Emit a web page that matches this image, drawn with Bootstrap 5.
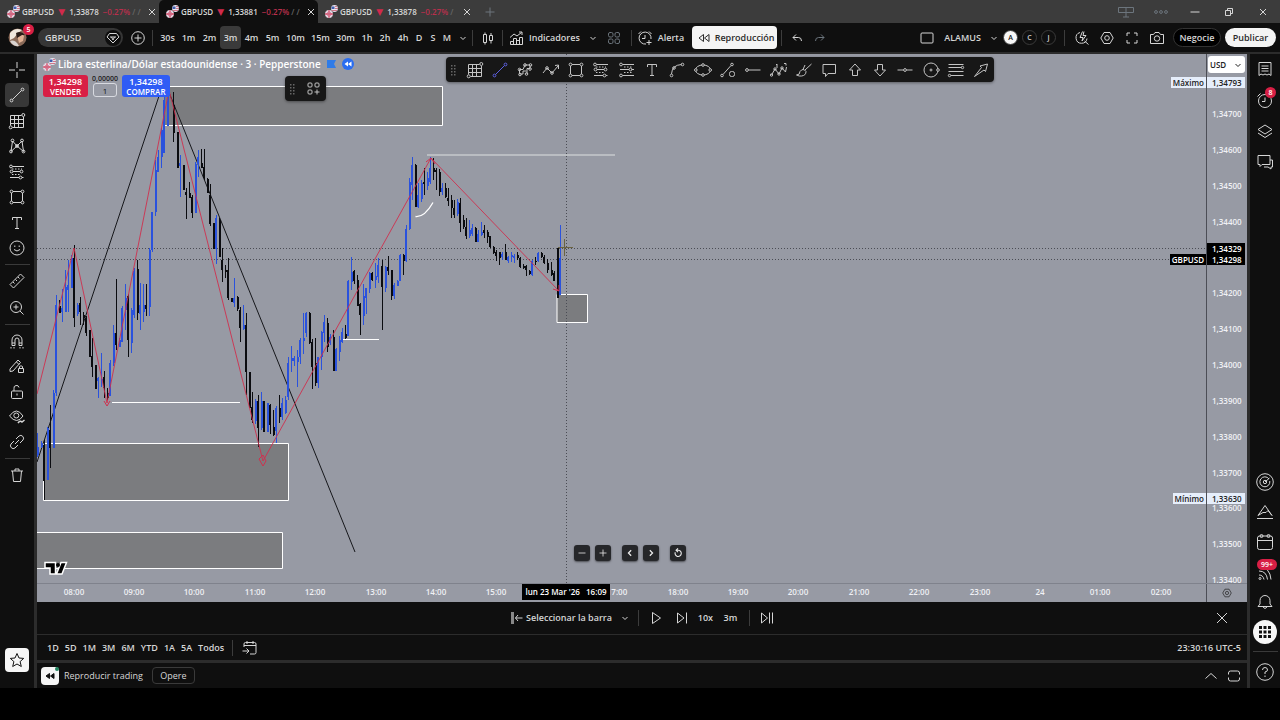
<!DOCTYPE html>
<html lang="es" data-bs-theme="dark">
<head>
<meta charset="utf-8">
<meta name="viewport" content="width=device-width, initial-scale=1">
<title>GBPUSD</title>
<link href="https://cdn.jsdelivr.net/npm/bootstrap@5.3.0/dist/css/bootstrap.min.css" rel="stylesheet">
<style>
:root{--panel:#0f0f0f;--line:#2c2c2c;--ink:#d6d6d6;--plot:#979aa4;--red:#d81f45;--blue:#2f5cf5}
body{background:#000;color:var(--ink);font:600 9px/14px "Open Sans","Noto Sans",sans-serif;min-height:100vh;padding-bottom:32px;overflow:hidden}
button{background:none;border:0;padding:0;color:inherit;font:inherit;line-height:14px;display:inline-flex;align-items:center;justify-content:center;white-space:nowrap;flex:none}
.ico{width:18px;height:18px;fill:none;stroke:currentColor;stroke-width:1;flex:none;display:block}
.vr-line{width:1px;height:16px;background:#3c3c3c;flex:none}
.hr-line{height:1px;width:25px;background:#3a3a3a;margin:4px auto}
/* window tabs */
.tabstrip{background:#3c3c3c;height:23px}
.win-tab{width:159px;padding:0 1px 0 7px;gap:2px;font-size:8px;background:#3c3c3c;height:23px}
.win-tab.on{background:var(--panel);border-radius:5px 5px 0 0}
.win-tab .chg{color:#b92f4c;flex:1;white-space:nowrap;padding-left:2px}
.win-tab .chg i{color:#666;font-style:normal}
.win-tab .down{color:#d12a4c;font:9px/14px "DejaVu Sans",sans-serif;padding:0 2px}
.flag{width:13px;height:13px;flex:none}
/* main toolbar */
.topbar{background:var(--panel);height:31px;border-bottom:2px solid var(--line)}
.b14{width:14px}.b18{width:18px}.b21{width:21px}.b25{width:25px}
.topbar .tf{height:23px;border-radius:4px}
.topbar .tf.on{background:#3a3a3a}
.avatar{width:19px;height:19px;margin-left:8px}
.alert-dot{position:absolute;left:15px;top:-4px;min-width:11px;height:11px;border-radius:6px;background:var(--red);color:#fff;font-size:7px;line-height:11px;text-align:center}
.sym{width:85px;height:19px;border-radius:10px;background:#363636;margin-left:11px;padding:0 2px 0 7px;justify-content:space-between}
.sym span{background:var(--panel);border-radius:50%;width:16px;height:16px}
.replay-on{background:#f4f4f4;color:#2a2a2a;width:85px;height:23px;border-radius:4px;gap:2px}
.disc{width:15px;height:15px;border-radius:50%;border:1px solid #3a3a3a;font-size:7px}
.disc.on{background:#f7f7f7;color:#111}
.pill{height:19px;border-radius:10px}
.pill.dark{background:#000;border:1px solid #333;width:48px}
.pill.light{background:#f4f4f4;color:#2a2a2a;width:51px}
/* side rails */
.rail{background:var(--panel);flex:none}
.rail-l{width:37px;border-right:3px solid var(--line);padding-top:4px}
.rail-r{width:33px;border-left:3px solid var(--line)}
.rail button{width:24px;height:24px;border-radius:4px;margin:0 auto;position:relative}
.rail-l button{margin-left:5px}
.rail button.on{background:#383838}
.g8{height:202px}.g2{height:51px}.g5{height:125px}.g4{height:123px}.g6{height:180px}
.rail .white{background:#f6f6f6;color:#111}
.rail .alert-dot{left:12px;top:-1px}
/* chart */
.plot{background:var(--plot);flex:1;min-width:0;min-height:0;overflow:hidden}
.plot svg.canvas{position:absolute;left:0;top:0;width:100%;height:100%}
.price{width:41px;background:var(--plot);border-left:1px solid #4c4e56;overflow:hidden;flex:none}
.price svg.canvas{position:absolute;left:0;top:0;width:100%;height:100%}
.canvas text{font:600 8px "Open Sans",sans-serif;fill:#f0f1f5}
.price select{position:absolute;left:1px;top:2px;width:37px;height:17px;border:0;border-radius:3px;background:#fff;color:#222;font:600 8px "Open Sans",sans-serif;padding:0 2px;appearance:none}
.price .caret{position:absolute;left:27px;top:7px;width:8px;height:8px;color:#222;pointer-events:none}
.tag{position:absolute;right:0;font-size:8px;line-height:11px;padding:0 2px;height:11px}
.price .tag{right:2px;left:0;padding:0 0 0 5px}
.tag.hi{background:#e6eefb;color:#222}
.tag.now{background:#000;color:#fff}
.legend{position:absolute;left:6px;top:3px;color:#fff;font-size:10px;line-height:14px;gap:2px}
.trade{position:absolute;left:6px;top:21px}
.trade button{width:45px;height:22px;border-radius:3px;flex-direction:column;color:#fff;font-size:8px;line-height:9px}
.sell{background:var(--red)}
.trade button.buy{width:48px;background:var(--blue)}
.trade button b{font-size:9px;font-weight:600;line-height:10px}
.trade label{font-size:7px;line-height:8px;color:#222}
.trade input{width:24px;height:14px;border:1px solid #d8dae0;border-radius:3px;background:#979aa4;color:#111;font:8px "Open Sans",sans-serif;text-align:center;padding:0}
.float-bar{position:absolute;background:#171717;border-radius:4px;color:#c4c4c4;box-shadow:0 1px 3px rgba(0,0,0,.4)}
.mini{left:248px;top:22px;width:41px;height:25px}
.draw{left:409px;top:3px;width:548px;height:25px}
.draw button{flex:1;height:25px}
.draw .lit{color:#5b5fe0}
.grip{width:16px;height:12px;flex:none}
.zoomers{position:absolute;left:537px;bottom:22px;gap:11px}
.zoomers div{gap:5px}
.zoomers button{width:16px;height:16px;border-radius:3px;background:#26272a;color:#eee;box-shadow:0 1px 2px rgba(0,0,0,.5)}
.zoomers .ico{width:14px;height:14px}
.time{height:19px;background:var(--plot);border-top:1px solid #7f828c;position:relative;overflow:hidden}
.time svg.canvas{width:100%;height:18px;display:block}
.time .when{position:absolute;left:485px;top:0;background:#000;color:#fff;font-size:8px;line-height:16px;width:88px;white-space:nowrap;text-align:center}
.time .cfg{width:41px;border-left:1px solid #4c4e56;flex:none;color:#222}
.below{background:var(--panel)}
.replay{height:33px;border-bottom:1px solid var(--line);position:relative}
.ranges{height:25px;padding:0 6px 0 10px;gap:6px}
.ranges .vr-line{margin:0 2px}
.tradebar{height:28px;border-top:3px solid var(--line);padding:0 4px;gap:5px;font-weight:400}
.rew-tile{background:#f5f5f5;color:#111}
.opere{border:1px solid #3a3a3a;border-radius:4px;width:43px;height:17px}
</style>
</head>
<body class="d-flex flex-column">

<svg width="0" height="0" class="position-absolute" aria-hidden="true"><defs>
<symbol id="flag" viewBox="0 0 13 13"><circle cx="9.500" cy="3.500" r="3.400" fill="#e9e4ee"/><path d="M6.500 1.500h3v2.500h-3z" fill="#3f5fae"/><path d="M10 1.500h2M10 3.500h3M6.500 5.500h5.500" stroke="#c95a70" stroke-width=".8"/><circle cx="4" cy="9" r="3.900" fill="#e6dfea"/><path d="M4 5.200v7.600M.2 9h7.600" stroke="#d3415f" stroke-width="1.300"/><path d="M1.500 6.500l5 5M6.500 6.500l-5 5" stroke="#cd7590" stroke-width=".7"/></symbol>
<symbol id="x" viewBox="0 0 18 18"><path d="M6 6l6 6M12 6l-6 6"/></symbol>
<symbol id="bigx" viewBox="0 0 18 18"><path d="M4 4l10 10M14 4L4 14"/></symbol>
<symbol id="plus" viewBox="0 0 18 18"><path d="M9 4.500v9M4.500 9h9"/></symbol>
<symbol id="minus" viewBox="0 0 18 18"><path d="M4.500 9h9"/></symbol>
<symbol id="chev" viewBox="0 0 18 18"><path d="M6.500 8L9 10.500 11.500 8"/></symbol>
<symbol id="chevup" viewBox="0 0 18 18"><path d="M3.500 11.500L9 6.500l5.500 5"/></symbol>
<symbol id="left" viewBox="0 0 18 18"><path d="M10.500 5.500L7 9l3.500 3.500" stroke-width="1.600"/></symbol>
<symbol id="right" viewBox="0 0 18 18"><path d="M7.500 5.500L11 9l-3.500 3.500" stroke-width="1.600"/></symbol>
<symbol id="reset" viewBox="0 0 18 18"><path d="M5.500 8a4 4 0 1 0 3.500-2.500H7M9 3L6.500 5.500 9 8" stroke-width="1.400"/></symbol>
<symbol id="circplus" viewBox="0 0 18 18"><circle cx="9" cy="9" r="6.300"/><path d="M9 5.500v7M5.500 9h7"/></symbol>
<symbol id="gem" viewBox="0 0 18 18"><path d="M5.500 4.500h7L15 8l-6 6-6-6zM6 8h6M7.500 8L9 11l1.500-3"/></symbol>
<symbol id="candles" viewBox="0 0 18 18"><path d="M4.500 5.500h3v8h-3zM6 3.500v2M6 13.500v2M10.500 6.500h3v5h-3zM12 4v2.500M12 11.500v3"/></symbol>
<symbol id="indic" viewBox="0 0 18 18"><path d="M3.500 15.500v-3h3v-3h3v2h3v-3h3v7zM6.500 12v3.500M9.500 11v4.500M12.500 11v4.500M3 8.500l4-3.500 3 2 4.500-3.500M12 3h3v3"/></symbol>
<symbol id="four" viewBox="0 0 18 18"><rect x="3.500" y="3.500" width="4.500" height="4.500" rx="1.500"/><rect x="10" y="3.500" width="4.500" height="4.500" rx="1.500"/><rect x="3.500" y="10" width="4.500" height="4.500" rx="1.500"/><rect x="10" y="10" width="4.500" height="4.500" rx="1.500"/></symbol>
<symbol id="alarm" viewBox="0 0 18 18"><path d="M10 15A6 6 0 1 1 15 10M9 6v3.500H6M2.500 5L5 2.500M13 2.500L15.500 5M13 11v5M10.500 13.500h5"/></symbol>
<symbol id="rew" viewBox="0 0 18 18"><path d="M8.500 5.500v7L4 9zM14 5.500v7L9.500 9z"/></symbol>
<symbol id="rewf" viewBox="0 0 18 18"><path fill="currentColor" d="M8.500 6.500v5L5 9zM13 6.500v5L9.500 9z"/></symbol>
<symbol id="undo" viewBox="0 0 18 18"><path d="M8 5.500L5 8.500l3 3M5 8.500h5.500q3 0 3 3.500"/></symbol>
<symbol id="redo" viewBox="0 0 18 18"><path d="M10 5.500l3 3-3 3M13 8.500H7.500q-3 0-3 3.500"/></symbol>
<symbol id="layout" viewBox="0 0 18 18"><rect x="3" y="4" width="12" height="10" rx="1"/></symbol>
<symbol id="quick" viewBox="0 0 18 18"><path d="M7 3.500a5.500 5.500 0 1 0 7 6M11.500 12l4 3.500M9.500 2.500L7 8.500h3L9 12l4-5.500h-3l1-4"/></symbol>
<symbol id="hex" viewBox="0 0 18 18"><path d="M6 3.500h6L15.200 9 12 14.500H6L2.800 9z"/><circle cx="9" cy="9" r="2.300"/></symbol>
<symbol id="full" viewBox="0 0 18 18"><path d="M4 7V4h3M11 4h3v3M14 11v3h-3M7 14H4v-3"/></symbol>
<symbol id="cam" viewBox="0 0 18 18"><path d="M2.500 5.500h3l1.500-2h4l1.500 2h3v9h-13z"/><circle cx="9" cy="9.500" r="2.700"/></symbol>
<symbol id="cross" viewBox="0 0 18 18"><path d="M9 1v6M9 11v6M1 9h6M11 9h6"/></symbol>
<symbol id="trend" viewBox="0 0 18 18"><path d="M4.500 13.500l9-9"/><circle cx="3.500" cy="14.500" r="1.400"/><circle cx="14.500" cy="3.500" r="1.400"/></symbol>
<symbol id="gann" viewBox="0 0 18 18"><path d="M2.500 3.500h11M2.500 3.500v10M2.500 7.500h13M2.500 11.500h13M4.500 15.500h11M6.500 3.500v12M10.500 3.500v12M15.500 5v10.500"/><circle cx="15.300" cy="3" r="1.500"/><circle cx="2.700" cy="15.300" r="1.500"/></symbol>
<symbol id="xabcd" viewBox="0 0 18 18"><path d="M3 14.500L4.500 4 9 9l5-5 1.500 10.500L9 9z"/><circle cx="3" cy="14.500" r="1.400"/><circle cx="4.500" cy="3.500" r="1.400"/><circle cx="9" cy="9" r="1.400"/><circle cx="14" cy="3.500" r="1.400"/><circle cx="15.500" cy="14.500" r="1.400"/></symbol>
<symbol id="fib" viewBox="0 0 18 18"><path d="M4.500 3.500H16M5 8.500h7M2 14.500h9"/><path d="M14 14.500h2M4 6h10M4 11.500h9" stroke-dasharray="1.500 1.500"/><circle cx="3" cy="3.500" r="1.400"/><circle cx="13.500" cy="8.500" r="1.400"/><circle cx="3.500" cy="8.500" r="1.400"/><circle cx="12.500" cy="14.500" r="1.400"/></symbol>
<symbol id="fib2" viewBox="0 0 18 18"><path d="M4.500 3.500H16M2 8.500h9M4.500 14.500H16M13.500 8.500H16"/><path d="M6 6h9M6 11.500h9" stroke-dasharray="1.500 1.500"/><circle cx="3" cy="3.500" r="1.400"/><circle cx="12.500" cy="8.500" r="1.400"/><circle cx="3" cy="14.500" r="1.400"/></symbol>
<symbol id="box" viewBox="0 0 18 18"><path d="M5 3.500h8M5 14.500h8M3.500 5v8M14.500 5v8"/><circle cx="3.500" cy="3.500" r="1.400"/><circle cx="14.500" cy="3.500" r="1.400"/><circle cx="3.500" cy="14.500" r="1.400"/><circle cx="14.500" cy="14.500" r="1.400"/></symbol>
<symbol id="tee" viewBox="0 0 18 18"><path d="M4.500 6V3.500h9V6M9 3.500v11M7 14.500h4"/></symbol>
<symbol id="smile" viewBox="0 0 18 18"><circle cx="9" cy="9" r="7"/><path d="M6 10.500q3 3 6 0M6.800 6.500v1.500M11.200 6.500v1.500"/></symbol>
<symbol id="ruler" viewBox="0 0 18 18"><path d="M2 12.500L12.500 2 16 5.500 5.500 16zM5 10l1.500 1.500M7.500 7.500L9 9M10 5l1.500 1.500"/></symbol>
<symbol id="zoomin" viewBox="0 0 18 18"><circle cx="8" cy="8" r="5.500"/><path d="M12 12l3.500 3.500M8 5.500v5M5.500 8h5"/></symbol>
<symbol id="magnet" viewBox="0 0 18 18"><path d="M4 13.500V8a5 5 0 0 1 10 0v5.500h-3V8a2 2 0 0 0-4 0v5.500zM4 11h3M11 11h3M3 15v1.500M6 15v1.500M12 15v1.500M15 15v1.500"/></symbol>
<symbol id="penlock" viewBox="0 0 18 18"><path d="M2 12l8-9 2.500 2.500L5 14l-3 .5zM8.500 5L11 7.500M10.500 11.500h5v4h-5zM11.500 11.500V9.500q1.500-1.500 3 0v2"/></symbol>
<symbol id="lock" viewBox="0 0 18 18"><rect x="3.500" y="8" width="11" height="7.500" rx="1"/><path d="M6 8V5.500a2.500 2.500 0 0 1 5-1M9 10.500v2"/></symbol>
<symbol id="eye" viewBox="0 0 18 18"><path d="M1.500 8Q8.500-2 15 8q-6 9-13.500 0z"/><circle cx="8.300" cy="7.500" r="2.500"/><path d="M10 15q2-3 4-1l2.500-2" stroke-width="1.500"/></symbol>
<symbol id="link" viewBox="0 0 18 18"><path d="M7 11l4-4M8 6l3-3q2-1.500 3.700.3T15 7l-3 3M10 12l-3 3q-2 1.500-3.700-.3T3 11l3-3"/></symbol>
<symbol id="trash" viewBox="0 0 18 18"><path d="M3 5h12M7 5V3h4v2M4.500 5L5.500 15.500h7L13.500 5"/></symbol>
<symbol id="star" viewBox="0 0 18 18"><path d="M9 2.500l2 4.500 4.700.4-3.600 3.200 1.200 4.900L9 13l-4.300 2.500 1.200-4.900L2.300 7.400 7 7z"/></symbol>
<symbol id="ghost" viewBox="0 0 18 18"><path d="M3.500 13V8.500H7L9 4h5v3.500h-3V13M3.500 13H7v-3h3.500"/><circle cx="3.500" cy="8.500" r="1.300"/><circle cx="9" cy="4" r="1.300"/><circle cx="14.500" cy="4" r="1.300"/><circle cx="14" cy="8" r="1.300"/><circle cx="10.500" cy="13" r="1.300"/><circle cx="4" cy="13.500" r="1.300"/></symbol>
<symbol id="zig" viewBox="0 0 18 18"><path d="M1 12l4-5 5 5 6-7M13 4.500l3.500-.5V8"/><circle cx="5" cy="7" r="1.300"/><circle cx="10" cy="12" r="1.300"/></symbol>
<symbol id="curve" viewBox="0 0 18 18"><path d="M3.500 13Q4 4 13.500 3.500"/><circle cx="3.500" cy="14.500" r="1.300"/><circle cx="14.500" cy="3.500" r="1.300"/><circle cx="6" cy="7" r="1.300"/></symbol>
<symbol id="ellipse" viewBox="0 0 18 18"><ellipse cx="9" cy="9" rx="7.500" ry="5"/><circle cx="9" cy="4" r="1.300" fill="#171717"/><circle cx="9" cy="14" r="1.300" fill="#171717"/><circle cx="1.800" cy="9" r="1.300" fill="#171717"/><circle cx="16.200" cy="9" r="1.300" fill="#171717"/></symbol>
<symbol id="trendc" viewBox="0 0 18 18"><path d="M4 13.500l8-9"/><circle cx="3" cy="14.500" r="1.300"/><circle cx="13" cy="3.500" r="1.300"/><rect x="10.500" y="10.500" width="5" height="5" rx="2"/></symbol>
<symbol id="ray" viewBox="0 0 18 18"><circle cx="3" cy="9" r="1.400"/><path d="M4.500 9h12"/></symbol>
<symbol id="elliott" viewBox="0 0 18 18"><path d="M1.500 14L5 8l4 5 3-6 3.500 4 1-5M6 4l1-1v4M14 2.500h2v2"/><circle cx="1.500" cy="14" r="1.200"/><circle cx="5" cy="8" r="1.200"/><circle cx="9" cy="13" r="1.200"/><circle cx="12" cy="7" r="1.200"/></symbol>
<symbol id="brush" viewBox="0 0 18 18"><path d="M1.500 14q3.500 0 3.500-3.500 3-4 6 0 0 4-4.500 4.500-2 .5-5-1zM10 9l6.500-6M8 8.500L10 4"/></symbol>
<symbol id="note" viewBox="0 0 18 18"><path d="M3 3.500h12.500v9H8l-2.500 3v-3H3z"/></symbol>
<symbol id="up" viewBox="0 0 18 18"><path d="M9 3L3.500 9h3v5.500h5V9h3z"/></symbol>
<symbol id="down" viewBox="0 0 18 18"><path d="M9 15L3.500 9h3V3.500h5V9h3z"/></symbol>
<symbol id="hline" viewBox="0 0 18 18"><path d="M1.500 9h6M10.500 9h6"/><circle cx="9" cy="9" r="1.400"/></symbol>
<symbol id="circ" viewBox="0 0 18 18"><circle cx="9" cy="9" r="7"/><circle cx="9" cy="9" r="1"/><circle cx="16" cy="9" r="1.300" fill="#171717"/></symbol>
<symbol id="lines" viewBox="0 0 18 18"><path d="M1.500 3.500h15M1.500 6.500h13M1.500 10.500h15M4 14.500h12.500"/><circle cx="15.500" cy="6.500" r="1.200"/><circle cx="2.500" cy="14.500" r="1.200"/></symbol>
<symbol id="arrow" viewBox="0 0 18 18"><path d="M2.500 15.500l7-9-1.500-1.500 7.500-2-2 7.500-1.500-1.500z"/></symbol>
<symbol id="addtpl" viewBox="0 0 18 18"><rect x="3" y="3" width="4" height="4" rx="1"/><rect x="10" y="3" width="4" height="4" rx="1"/><rect x="3" y="10" width="4" height="4" rx="1"/><path d="M12 9.500v5M9.500 12h5"/></symbol>
<symbol id="grip" viewBox="0 0 16 12"><g fill="#666" stroke="none"><path d="M5 1h1.500v1.500H5zM8 1h1.500v1.500H8zM5 4h1.500v1.500H5zM8 4h1.500v1.500H8zM5 7h1.500v1.500H5zM8 7h1.500v1.500H8zM5 10h1.500v1.500H5zM8 10h1.500v1.500H8z"/></g></symbol>
<symbol id="news" viewBox="0 0 18 18"><path d="M3 2.500h12v13l-2-1.500-2 1-2-1-2 1-2-1-2 1.500zM5.500 6h7M5.500 8.500h7M5.500 11h7"/></symbol>
<symbol id="clock" viewBox="0 0 18 18"><circle cx="9" cy="10" r="6.500"/><path d="M9 6.500v4H6M1.500 5.500l3-3"/></symbol>
<symbol id="layers" viewBox="0 0 18 18"><path d="M9 3l7 4.500L9 12 2 7.500zM2 11l7 4.500L16 11"/></symbol>
<symbol id="chat" viewBox="0 0 18 18"><path d="M2 2.500h12v9H6l-2 2v-2H2zM14 7h2.500v7H15v2l-3-2H8"/></symbol>
<symbol id="radar" viewBox="0 0 18 18"><circle cx="9" cy="9" r="8.300"/><path d="M13 6a5 5 0 1 0 .8 2M9 9l4.500-4"/><circle cx="9" cy="9" r="1.700"/></symbol>
<symbol id="mount" viewBox="0 0 18 18"><path d="M1 15.500h16M2 12.500l7-10 7 10M2 12.500l5-3 3 0 2-2 4 5"/></symbol>
<symbol id="cal" viewBox="0 0 18 18"><rect x="1.500" y="3" width="15" height="13.500" rx="2"/><path d="M1.500 7.500h15"/><circle cx="5.500" cy="3" r="1.500"/><circle cx="12.500" cy="3" r="1.500"/></symbol>
<symbol id="feed" viewBox="0 0 18 18"><path d="M3 4q11 0 12 12.500M3 8q7.500 0 8.500 8.500M3 12q4 0 5 4.500"/><circle cx="4" cy="15.500" r="1"/></symbol>
<symbol id="bell" viewBox="0 0 18 18"><path d="M2 13.500h14L14 11V7.500a5 5 0 0 0-10 0V11zM7 14q2 3 4 0"/></symbol>
<symbol id="apps" viewBox="0 0 18 18"><g fill="currentColor" stroke="none"><path d="M3 3h3v3H3zM7.500 3h3v3h-3zM12 3h3v3h-3zM3 7.500h3v3H3zM7.500 7.500h3v3h-3zM12 7.500h3v3h-3zM3 12h3v3H3zM7.500 12h3v3h-3zM12 12h3v3h-3z"/></g></symbol>
<symbol id="help" viewBox="0 0 18 18"><circle cx="9" cy="9" r="8.300"/><path d="M6.500 7q0-2.500 2.500-2.500T11.500 7Q11.500 8.500 9 9v2M9 12.500V14"/></symbol>
<symbol id="selbar" viewBox="0 0 18 18"><path d="M4.500 3v12" stroke-width="3" stroke="#888"/><path d="M7.500 9h7M10 6L7.500 9l2.500 3"/></symbol>
<symbol id="play" viewBox="0 0 18 18"><path d="M5.500 3.500v11l8-5.500z"/></symbol>
<symbol id="step" viewBox="0 0 18 18"><path d="M4.500 4v10l6.500-5zM13.500 3.500v11"/></symbol>
<symbol id="toend" viewBox="0 0 18 18"><path d="M3.500 4v10l6-5zM11.500 3.500v11M14.500 3.500v11"/></symbol>
<symbol id="goto" viewBox="0 0 18 18"><path d="M3 8V5q0-1.500 1.500-1.500h9Q15 3.500 15 5v8.500q0 1.500-1.500 1.500H9M3 6.500h12M6 2v3M12 2v3M1.500 12h6M5.500 9.500L8 12l-2.500 2.500"/></symbol>
<symbol id="square" viewBox="0 0 18 18"><path d="M3.500 7.500V6Q3.500 4 5.500 4h7q2 0 2 2v1.500M3.500 10.500V12q0 2 2 2h7q2 0 2-2v-1.500"/></symbol>
<symbol id="panes" viewBox="0 0 18 18"><path d="M1.500 4.500h15v5h-15zM9 4.500V14M6 14h6"/></symbol>
<symbol id="dots" viewBox="0 0 18 18"><circle cx="4" cy="9" r="1.400"/><circle cx="9" cy="9" r="1.400"/><circle cx="14" cy="9" r="1.400"/></symbol>
<symbol id="restore" viewBox="0 0 18 18"><path d="M5.500 7.500h5v5h-5zM7.500 7V5.500h5v5H11"/></symbol>
</defs></svg>

<header>
  <div class="tabstrip d-flex align-items-center">
    <div class="win-tab d-flex align-items-center"><svg class="flag"><use href="#flag"/></svg><span>GBPUSD</span><span class="down">▼</span><span>1,33878</span><span class="chg">−0.27% <i>/ /</i></span><button aria-label="Cerrar"><svg class="ico"><use href="#x"/></svg></button></div>
    <div class="win-tab on d-flex align-items-center"><svg class="flag"><use href="#flag"/></svg><span>GBPUSD</span><span class="down">▼</span><span>1,33881</span><span class="chg">−0.27% <i>/ /</i></span><button aria-label="Cerrar"><svg class="ico"><use href="#x"/></svg></button></div>
    <div class="win-tab d-flex align-items-center"><svg class="flag"><use href="#flag"/></svg><span>GBPUSD</span><span class="down">▼</span><span>1,33878</span><span class="chg">−0.27% <i>/</i></span><button aria-label="Cerrar"><svg class="ico"><use href="#x"/></svg></button></div>
    <button class="ms-1 text-secondary" aria-label="Nueva pestaña"><svg class="ico"><use href="#plus"/></svg></button>
    <div class="ms-auto d-flex align-items-center pe-2">
      <button class="me-2 text-secondary" aria-label="Paneles"><svg class="ico"><use href="#panes"/></svg></button><span class="vr-line"></span>
      <button class="ms-2 me-3 text-secondary" aria-label="Más"><svg class="ico"><use href="#dots"/></svg></button>
      <button class="me-3" aria-label="Minimizar"><svg class="ico"><use href="#minus"/></svg></button>
      <button class="me-3" aria-label="Restaurar"><svg class="ico"><use href="#restore"/></svg></button>
      <button aria-label="Cerrar ventana"><svg class="ico"><use href="#x"/></svg></button>
    </div>
  </div>
  <nav class="topbar d-flex align-items-center">
    <button class="avatar position-relative" aria-label="Perfil"><svg width="19" height="19" viewBox="0 0 19 19"><circle cx="9.500" cy="9.500" r="9" fill="#8a6a58"/><path d="M2 5Q7-1 14 2l-4 3-4 5-4 2z" fill="#efe6dc"/><path d="M9 7q4-3 7 1l-1 5-4 2z" fill="#e0b193"/><path d="M8 5q5-3 9 2l-3 0-5 3z" fill="#2a1c18"/><path d="M2 13q5-2 9 5-6 1-9-5z" fill="#d9d3d0"/></svg><span class="alert-dot">5</span></button>
    <button class="sym">GBPUSD<span class="d-flex align-items-center justify-content-center"><svg class="ico" viewBox="0 0 18 18"><use href="#gem" width="18" height="18"/></svg></span></button>
    <button class="ms-1 me-1 b21" aria-label="Comparar"><svg class="ico"><use href="#circplus"/></svg></button>
    <span class="vr-line me-1"></span>
    <button class="tf b21">30s</button><button class="tf b21">1m</button><button class="tf b21">2m</button><button class="tf b21 on">3m</button><button class="tf b21">4m</button><button class="tf b21">5m</button><button class="tf b25">10m</button><button class="tf b25">15m</button><button class="tf b25">30m</button><button class="tf b18">1h</button><button class="tf b18">2h</button><button class="tf b18">4h</button><button class="tf b14">D</button><button class="tf b14">S</button><button class="tf b14">M</button>
    <button aria-label="Intervalos"><svg class="ico"><use href="#chev"/></svg></button>
    <span class="vr-line"></span>
    <button class="mx-1 b21" aria-label="Velas"><svg class="ico"><use href="#candles"/></svg></button>
    <span class="vr-line"></span>
    <button class="ms-1"><svg class="ico me-1"><use href="#indic"/></svg>Indicadores</button>
    <button class="ms-1" aria-label="Favoritos"><svg class="ico"><use href="#chev"/></svg></button>
    <button class="me-1 text-secondary b25" aria-label="Plantillas"><svg class="ico"><use href="#four"/></svg></button>
    <span class="vr-line"></span>
    <button class="ms-1 me-2"><svg class="ico me-1"><use href="#alarm"/></svg>Alerta</button>
    <button class="replay-on"><svg class="ico"><use href="#rew"/></svg>Reproducción</button>
    <span class="vr-line ms-1 me-1"></span>
    <button class="b21" aria-label="Deshacer"><svg class="ico"><use href="#undo"/></svg></button>
    <button class="b25 text-secondary" aria-label="Rehacer"><svg class="ico"><use href="#redo"/></svg></button>
    <div class="ms-auto d-flex align-items-center">
      <button class="me-2" aria-label="Diseño"><svg class="ico"><use href="#layout"/></svg></button>
      <button>ALAMUS</button>
      <button class="ms-1" aria-label="Diseños"><svg class="ico"><use href="#chev"/></svg></button>
      <div class="d-flex gap-1"><button class="disc on">A</button><button class="disc">C</button><button class="disc">J</button></div>
      <span class="vr-line ms-2 me-1"></span>
      <button class="b25" aria-label="Buscar"><svg class="ico"><use href="#quick"/></svg></button><button class="b25" aria-label="Ajustes"><svg class="ico"><use href="#hex"/></svg></button><button class="b25" aria-label="Pantalla completa"><svg class="ico"><use href="#full"/></svg></button><button class="b25 me-1" aria-label="Instantánea"><svg class="ico"><use href="#cam"/></svg></button>
      <button class="pill dark me-1">Negocie</button><button class="pill light me-1">Publicar</button>
    </div>
  </nav>
</header>

<main class="d-flex flex-grow-1">
  <aside class="rail rail-l d-flex flex-column">
    <div class="g8 d-flex flex-column justify-content-between" data-icons="cross trend* gann xabcd fib box tee smile"></div>
    <div class="hr-line"></div>
    <div class="g2 d-flex flex-column justify-content-between" data-icons="ruler zoomin"></div>
    <div class="hr-line"></div>
    <div class="g5 d-flex flex-column justify-content-between" data-icons="magnet penlock lock eye link"></div>
    <div class="hr-line"></div>
    <div data-icons="trash"></div>
    <button class="white mt-auto mb-3" aria-label="Favoritos"><svg class="ico"><use href="#star"/></svg></button>
  </aside>

  <section class="d-flex flex-column flex-grow-1 below">
    <div class="d-flex flex-grow-1">
      <div class="plot position-relative">
        <svg class="canvas" aria-label="Gráfico de velas"><g transform="translate(-37 -54)">
          <g fill="#7b7c7f" stroke="#fff"><path d="M165 86.500h277.500v39H165"/><path d="M43.500 443.500h245v57h-245z"/><path d="M30 532.500h252.500v36H30z"/><path d="M557 294.500h30.500v28H557z"/></g>
          <path d="M112 402.500h128M343 339.500h36" stroke="#fff"/>
          <path d="M427 155h188" stroke="#c6c8cd" stroke-width="1.500"/>
          <path d="M415.500 216.500q9 1 17.500-14" stroke="#fff" stroke-width="1.300" fill="none"/>
          <path d="M37 248.500h1169M37 259.500h1169M566.500 54v530" stroke="#4a4c54" stroke-dasharray="1 2"/>
          <path d="M37 462L163 84M168 90L355 552" stroke="#16171b" fill="none"/>
          <g id="candleLayer" shape-rendering="crispEdges"></g>
          <path d="M37 394L74 248l33 155L169 90l94 371L431 158l128 133" stroke="#cf304e" stroke-width=".9" fill="none"/>
          <path d="M104 401l3 5 3-5M259 459l4 7 3-5-3-6zM426 162l5-4 4 6M553 289l6 2v-6" stroke="#cf304e" fill="none"/>
          <path d="M564.500 239v17M558 247.500h15" stroke="#6b6342"/>
          <g transform="translate(45 561)"><path d="M0 1.500h10.500v11.500H5V7H0zM21.500 1.500H16L11.500 13H17z" fill="#000" stroke="#fff" stroke-width="1.500"/><circle cx="13" cy="4" r="2" fill="#000"/></g>
        </g></svg>
        <div class="legend d-flex align-items-center"><svg class="flag"><use href="#flag"/></svg><span>Libra esterlina/Dólar estadounidense · 3 · Pepperstone</span><svg class="ms-1 me-1" width="9" height="8" viewBox="0 0 9 8"><path d="M0 0h9L7 4l2 4H0z" fill="#2f7be8"/></svg><svg width="12" height="12" viewBox="0 0 12 12"><circle cx="6" cy="6" r="6" fill="#2a6df0"/><path d="M6 3.500v5L2.500 6zM9.500 3.500v5L6 6z" fill="#fff"/></svg></div>
        <div class="trade d-flex align-items-start">
          <button class="sell"><b>1,34298</b>VENDER</button>
          <div class="d-flex flex-column align-items-center mx-1"><label for="qty">0,00000</label><input id="qty" value="1"></div>
          <button class="buy"><b>1,34298</b>COMPRAR</button>
        </div>
        <div class="float-bar mini d-flex align-items-center"><svg class="grip"><use href="#grip"/></svg><button class="flex-grow-1" aria-label="Agregar plantilla"><svg class="ico"><use href="#addtpl"/></svg></button></div>
        <div class="float-bar draw d-flex align-items-center"><svg class="grip"><use href="#grip"/></svg><div class="d-flex flex-grow-1" data-icons="gann trend! ghost zig box fib fib2 tee curve ellipse trendc ray elliott brush note up down hline circ lines arrow"></div></div>
        <div class="zoomers d-flex">
          <div class="d-flex"><button aria-label="Alejar"><svg class="ico"><use href="#minus"/></svg></button><button aria-label="Acercar"><svg class="ico"><use href="#plus"/></svg></button></div>
          <div class="d-flex"><button aria-label="Izquierda"><svg class="ico"><use href="#left"/></svg></button><button aria-label="Derecha"><svg class="ico"><use href="#right"/></svg></button></div>
          <button aria-label="Restablecer"><svg class="ico"><use href="#reset"/></svg></button>
        </div>
        <span class="tag hi" style="top:23px">Máximo</span>
        <span class="tag now" style="top:200px">GBPUSD</span>
        <span class="tag hi" style="top:439px">Mínimo</span>
      </div>
      <div class="price position-relative">
        <svg class="canvas" id="prices"></svg>
        <select aria-label="Moneda"><option>USD</option></select><svg class="caret" viewBox="5 5 8 8" fill="none" stroke="currentColor"><use href="#chev" width="18" height="18"/></svg>
        <span class="tag hi" style="top:23px">1,34793</span>
        <span class="tag now" style="top:189px">1,34329</span>
        <span class="tag now" style="top:200px">1,34298</span>
        <span class="tag hi" style="top:439px">1,33630</span>
      </div>
    </div>
    <div class="time d-flex"><svg class="canvas flex-grow-1" id="hours"></svg><span class="when">lun 23 Mar '26 &nbsp; 16:09</span><button class="cfg" aria-label="Ajustes del eje"><svg class="ico" viewBox="-4 -4 26 26"><use href="#hex" width="18" height="18"/></svg></button></div>
    <div class="replay d-flex align-items-center justify-content-center">
      <button class="me-1"><svg class="ico"><use href="#selbar"/></svg>Seleccionar la barra<svg class="ico ms-1"><use href="#chev"/></svg></button><span class="vr-line"></span>
      <button class="ms-2 me-2" aria-label="Reproducir"><svg class="ico"><use href="#play"/></svg></button><button class="me-1" aria-label="Avanzar"><svg class="ico"><use href="#step"/></svg></button>
      <button class="me-1 b21">10x</button><button class="me-2 b21">3m</button><span class="vr-line"></span><button class="ms-2" aria-label="Ir al final"><svg class="ico"><use href="#toend"/></svg></button>
      <button class="position-absolute end-0 me-3" aria-label="Cerrar"><svg class="ico"><use href="#bigx"/></svg></button>
    </div>
    <div class="ranges d-flex align-items-center"><button>1D</button><button>5D</button><button>1M</button><button>3M</button><button>6M</button><button>YTD</button><button>1A</button><button>5A</button><button>Todos</button><span class="vr-line"></span><button aria-label="Ir a fecha"><svg class="ico"><use href="#goto"/></svg></button><button class="ms-auto">23:30:16 UTC-5</button></div>
    <div class="tradebar d-flex align-items-center"><span class="rew-tile position-relative rounded-1 d-flex"><svg class="ico"><use href="#rewf"/></svg><svg class="position-absolute top-0 end-0" width="4" height="4"><circle cx="2" cy="2" r="2" fill="#23845f"/></svg></span><span>Reproducir trading</span><button class="opere ms-1">Opere</button><button class="ms-auto" aria-label="Expandir"><svg class="ico"><use href="#chevup"/></svg></button><button aria-label="Maximizar"><svg class="ico"><use href="#square"/></svg></button></div>
  </section>

  <aside class="rail rail-r d-flex flex-column">
    <div class="g4 d-flex flex-column justify-content-around"><button aria-label="Lista"><svg class="ico"><use href="#news"/></svg></button><button aria-label="Alertas"><svg class="ico"><use href="#clock"/></svg><span class="alert-dot">8</span></button><button aria-label="Capas"><svg class="ico"><use href="#layers"/></svg></button><button aria-label="Chat"><svg class="ico"><use href="#chat"/></svg></button></div>
    <div class="g6 d-flex flex-column justify-content-around mt-auto"><button aria-label="Screener"><svg class="ico"><use href="#radar"/></svg></button><button aria-label="Pine"><svg class="ico"><use href="#mount"/></svg></button><button aria-label="Calendario"><svg class="ico"><use href="#cal"/></svg></button><button aria-label="Noticias"><svg class="ico"><use href="#feed"/></svg><span class="alert-dot px-1 start-0 ms-1">99+</span></button><button aria-label="Notificaciones"><svg class="ico"><use href="#bell"/></svg></button><button class="white rounded-circle" aria-label="Productos"><svg class="ico"><use href="#apps"/></svg></button></div>
    <div class="hr-line"></div>
    <button class="mt-1 mb-1" aria-label="Ayuda"><svg class="ico"><use href="#help"/></svg></button>
  </aside>
</main>

<script src="https://cdn.jsdelivr.net/npm/bootstrap@5.3.0/dist/js/bootstrap.bundle.min.js"></script>
<script>
// Icon rows: "*" marks the selected tool, "!" the highlighted one.
document.querySelectorAll('[data-icons]').forEach(box => {
  box.innerHTML = box.dataset.icons.split(' ').map(n => {
    const id = n.replace(/[*!]/, '');
    const cls = n.includes('*') ? 'on' : n.includes('!') ? 'lit' : '';
    return `<button aria-label="${id}" class="${cls}"><svg class="ico"><use href="#${id}"/></svg></button>`;
  }).join('');
});
// Candles: x, high, body top, body bottom, low; negative x means a falling candle.
const bars = `37,433,447,455,457 41,441,443,447,448 -44,440,445,481,500 47,427,428,480,480 -50,405,430,448,468 53,390,393,448,448 56,295,305,393,396 -59,300,306,313,313 62,289,308,312,322 65,270,287,312,312 68,260,285,290,312 71,255,258,288,288 -74,245,258,318,327 77,303,305,314,316 -80,297,303,312,325 -83,312,315,318,325 -86,316,318,333,336 -89,330,330,357,357 -92,338,356,367,377 -95,365,365,389,389 98,377,378,381,398 101,353,379,381,387 -104,371,377,388,398 -107,388,393,398,400 110,360,363,396,396 113,325,333,363,366 -116,279,333,345,350 119,338,340,347,347 122,306,308,342,342 125,284,298,310,330 -128,294,296,340,357 131,308,310,343,353 134,268,271,315,318 -137,260,269,313,320 140,283,305,314,330 143,284,305,312,322 -146,284,305,309,316 149,248,250,307,316 152,212,212,250,252 155,160,170,212,216 158,150,157,172,172 161,128,130,157,168 164,97,100,153,153 167,90,92,126,126 -173,92,105,133,142 -177,132,132,168,168 180,155,163,166,197 -183,165,165,190,190 -186,188,192,195,219 -189,182,193,198,198 -192,195,197,213,218 195,162,164,213,213 198,150,157,164,177 -201,149,163,168,168 -204,149,167,178,180 -207,178,179,193,193 -210,184,195,224,226 -213,223,223,249,249 216,215,218,249,264 -219,218,220,257,257 -222,248,260,270,282 -225,265,270,272,278 -228,258,270,298,300 -231,298,298,302,302 234,278,298,303,307 -237,296,297,309,311 -240,307,310,328,342 243,305,325,329,330 -246,313,325,372,395 -249,372,372,408,408 -252,392,407,420,423 255,399,401,421,424 -258,395,401,428,447 261,392,401,428,430 -264,401,401,432,432 267,403,403,432,432 -270,404,405,425,434 -273,410,427,435,436 276,406,408,431,443 -279,395,408,417,423 282,398,403,417,420 285,396,400,413,414 288,357,363,397,400 291,346,358,361,372 294,356,358,361,366 297,350,357,362,387 300,338,340,357,364 303,313,338,341,354 306,312,313,333,337 -309,312,313,343,344 -312,339,342,367,389 -315,338,363,383,386 318,357,357,383,388 321,331,332,357,370 324,315,322,333,342 -327,318,323,347,352 330,334,337,343,345 -333,330,337,371,371 336,348,349,371,371 339,336,340,352,361 342,328,332,342,343 -345,325,334,338,339 348,280,281,336,336 351,257,272,282,290 -354,270,271,281,284 -357,275,280,306,306 -360,303,304,315,335 363,284,296,316,325 366,288,288,298,314 369,272,273,289,293 -372,272,273,280,281 375,263,276,280,288 378,258,265,277,283 -382,260,266,287,330 385,266,267,288,292 -388,256,267,271,275 -391,270,270,296,300 394,283,285,296,299 397,280,281,286,286 400,254,255,281,281 -403,254,255,261,275 406,225,229,261,262 409,178,182,229,230 412,157,165,185,200 -415,164,165,207,207 418,183,195,207,208 421,180,183,199,202 -424,168,182,184,195 427,172,178,186,190 430,157,168,182,184 -433,158,168,172,180 -436,168,170,172,190 -439,169,172,192,196 442,183,188,192,195 -445,183,188,197,198 -448,188,198,201,206 -451,195,200,208,218 -454,200,208,215,218 457,199,202,214,216 -460,198,203,223,232 -463,215,220,227,229 -466,218,227,236,239 469,220,230,236,238 472,224,228,234,236 -475,227,228,242,242 478,230,234,242,242 481,222,232,235,236 -484,225,230,233,238 -487,230,232,237,243 -490,236,236,247,248 -493,246,247,253,254 -496,250,252,256,261 -499,252,252,258,265 502,252,254,257,260 -505,244,252,260,260 508,256,257,261,263 511,252,255,257,262 514,254,256,258,263 -517,252,255,258,260 -520,257,258,267,268 -523,264,266,268,269 -526,265,266,270,276 -529,270,271,274,275 532,260,261,275,276 -535,257,261,262,265 538,252,253,261,262 -541,252,253,257,258 -544,255,257,263,264 -547,259,263,270,273 -551,262,270,275,276 -554,271,273,281,281 -557,248,248,298,298 560,225,258,295,295`;
document.getElementById('candleLayer').innerHTML = bars.split(' ').map(s => {
  const [x, h, t, b, l] = s.split(',').map(Number), c = x < 0 ? '#0b0c10' : '#2a52dd', ax = Math.abs(x);
  return `<path fill="${c}" d="M${ax} ${h}h1V${l}h-1z"/><path fill="${c}" d="M${ax - (ax % 2 ? 0 : 1)} ${t}h2V${b}h-2z"/>`;
}).join('');
// Price scale, one label every 0.001; 1,34300 gives way to the current price tags.
document.getElementById('prices').innerHTML = Array.from({length: 14}, (_, i) => i).filter(i => i !== 4).map(i =>
  `<text x="5" y="${Math.round(63 + i * 35.85)}">${((134700 - i * 100) / 1e5).toFixed(5).replace('.', ',')}</text>`).join('');
// Time scale, one label per hour.
const hours = ['08:00','09:00','10:00','11:00','12:00','13:00','14:00','15:00','','17:00','18:00','19:00','20:00','21:00','22:00','23:00','24','01:00','02:00'];
document.getElementById('hours').innerHTML = hours.map((t, i) => `<text text-anchor="middle" x="${Math.round(36.5 + i * 60.4)}" y="11">${t}</text>`).join('');
</script>
</body>
</html>
